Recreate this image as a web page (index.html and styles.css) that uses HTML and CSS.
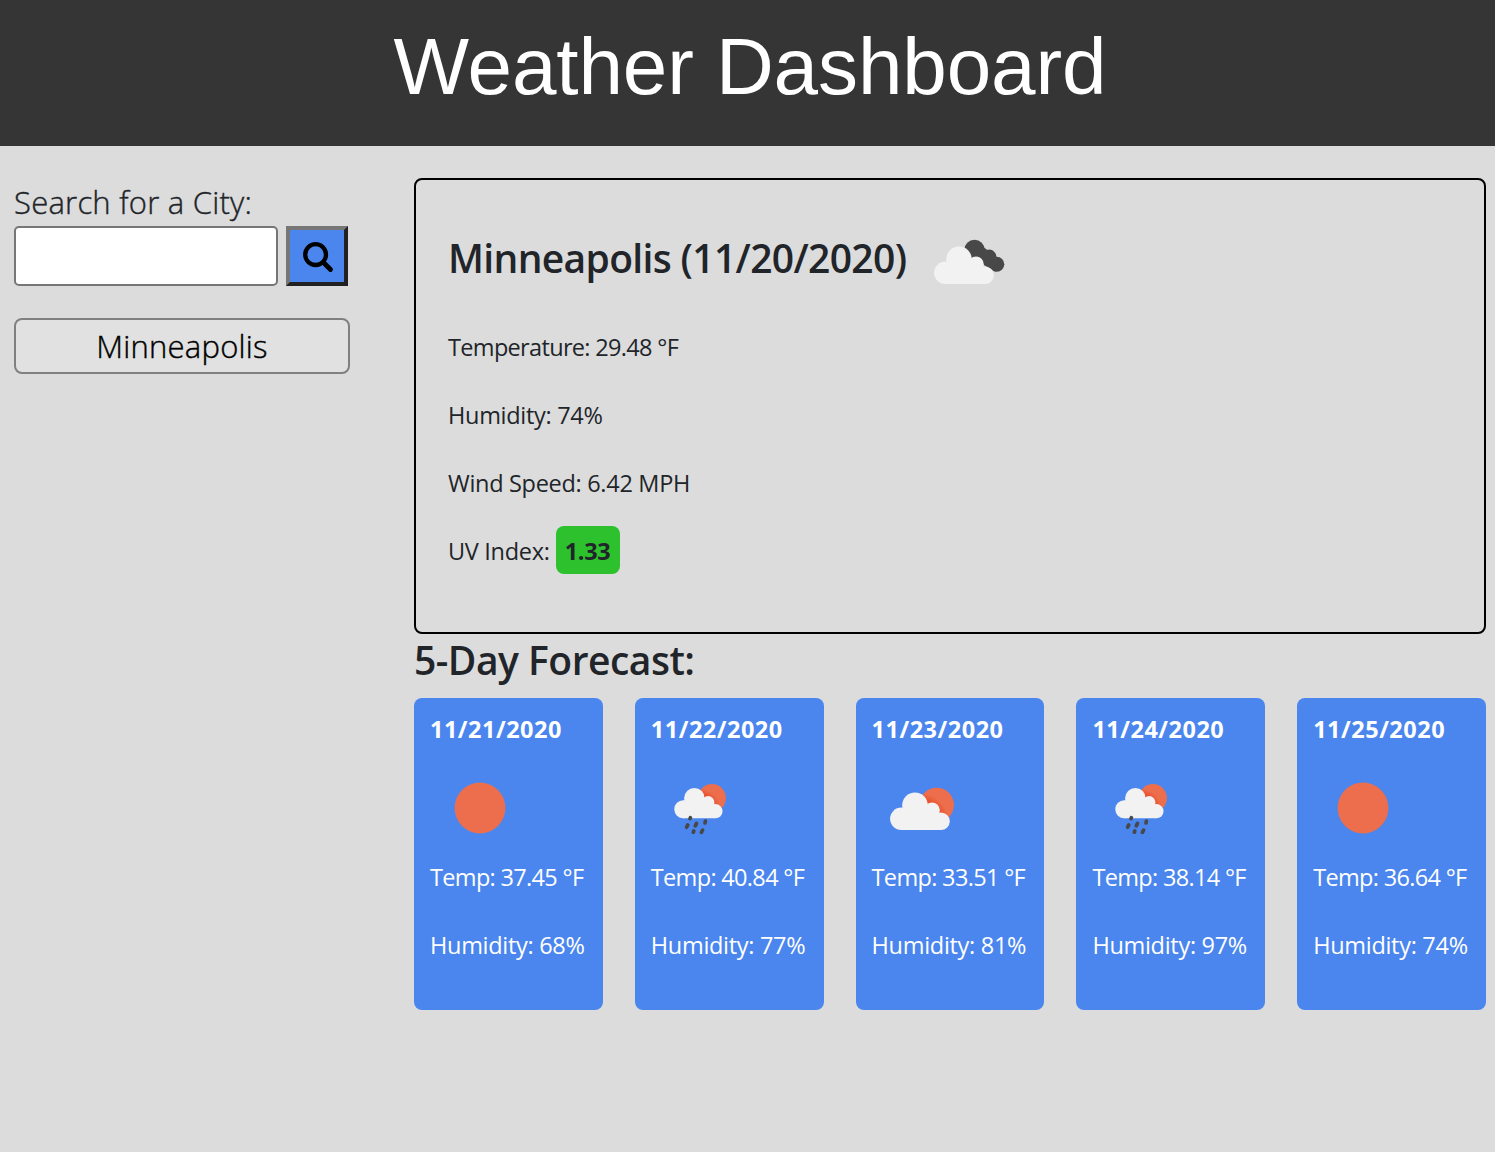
FILE: index.html
```html
<!DOCTYPE html>
<html lang="en">
<head>
<meta charset="utf-8">
<title>Weather Dashboard</title>
<link rel="stylesheet" href="styles.css">
</head>
<body>
<svg class="sprite" aria-hidden="true">
  <defs>
    <radialGradient id="shade" gradientUnits="userSpaceOnUse" cx="48" cy="64" r="32">
      <stop offset="0.6" stop-color="#e9431f"/><stop offset="0.9" stop-color="#ec6e4c"/>
    </radialGradient>
    <g id="cloud">
      <circle cx="29.3" cy="60.8" r="11.2"/><circle cx="43" cy="47.2" r="12.8"/>
      <circle cx="60" cy="52.3" r="7.8"/><circle cx="69" cy="63.2" r="8.8"/>
      <path d="M29 72V50H62L69 56V72Z"/>
    </g>
    <g id="cloud-sun">
      <circle cx="64.7" cy="47" r="17.3" fill="url(#shade)"/>
      <use href="#cloud" fill="#f2f2f2"/>
    </g>
    <symbol id="sun" viewBox="0 0 100 100"><circle cx="50" cy="50" r="25.4" fill="#ec6e4c"/></symbol>
    <symbol id="partly" viewBox="0 0 100 100"><use href="#cloud-sun"/></symbol>
    <symbol id="broken" viewBox="0 0 100 100">
      <g fill="#484848"><circle cx="58.5" cy="38" r="10.2"/><circle cx="73.3" cy="44.6" r="7"/><circle cx="80.8" cy="52.2" r="7.5"/><path d="M52 44L66 34L82 46L80 59.7L66 52Z"/></g>
      <use href="#cloud" fill="#f2f2f2"/>
    </symbol>
    <symbol id="rain" viewBox="0 0 100 100">
      <use href="#cloud-sun" transform="translate(8.66 2.12) scale(.808)"/>
      <g stroke="#484848" stroke-width="3.7" stroke-linecap="round"><path d="M39.4 59.6L39 60.6M36.8 67L35.6 69.2M45.5 65.4L44.3 67.8M54.4 63L54 65M42.8 73L42.3 74.2M51.6 72.2L50.4 74.4"/></g>
    </symbol>
  </defs>
</svg>
<header class="header"><h1 class="title">Weather Dashboard</h1></header>
<main class="layout">
  <aside class="sidebar">
    <label class="label" for="city">Search for a City:</label>
    <div class="search">
      <input class="field" id="city" type="text">
      <button class="go" aria-label="Search"><svg class="glass" viewBox="0 0 32 32"><circle cx="12.6" cy="12.6" r="10.4" fill="none" stroke="#000" stroke-width="4.3"/><path d="M20.5 20.5L27.5 27.5" stroke="#000" stroke-width="4.8" stroke-linecap="round"/></svg></button>
    </div>
    <button class="city">Minneapolis</button>
  </aside>
  <section class="content">
    <div class="current">
      <div class="heading"><h2 class="h2 place">Minneapolis (11/20/2020)</h2><svg class="icon"><use href="#broken"/></svg></div>
      <p class="line temp">Temperature: 29.48 °F</p>
      <p class="line">Humidity: 74%</p>
      <p class="line">Wind Speed: 6.42 MPH</p>
      <p class="line uv-line"><span>UV Index:</span><span class="uv">1.33</span></p>
    </div>
    <h2 class="h2 forecast-title">5-Day Forecast:</h2>
    <div class="forecast">
      <div class="card"><p class="date">11/21/2020</p><svg class="icon"><use href="#sun"/></svg><p class="line temp">Temp: 37.45 °F</p><p class="line">Humidity: 68%</p></div>
      <div class="card"><p class="date">11/22/2020</p><svg class="icon"><use href="#rain"/></svg><p class="line temp">Temp: 40.84 °F</p><p class="line">Humidity: 77%</p></div>
      <div class="card"><p class="date">11/23/2020</p><svg class="icon"><use href="#partly"/></svg><p class="line temp">Temp: 33.51 °F</p><p class="line">Humidity: 81%</p></div>
      <div class="card"><p class="date">11/24/2020</p><svg class="icon"><use href="#rain"/></svg><p class="line temp">Temp: 38.14 °F</p><p class="line">Humidity: 97%</p></div>
      <div class="card"><p class="date">11/25/2020</p><svg class="icon"><use href="#sun"/></svg><p class="line temp">Temp: 36.64 °F</p><p class="line">Humidity: 74%</p></div>
    </div>
  </section>
</main>
</body>
</html>
```
FILE: styles.css
```css
* { box-sizing: border-box; }
body { margin: 0; background: #dcdcdc; color: #212529; font-family: "Open Sans", "Noto Sans", sans-serif; font-size: 23.5px; line-height: 36px; }
h1, h2, p { margin: 0; }
.sprite { position: absolute; width: 0; height: 0; }
.header { height: 146px; background: #353535; color: #fff; text-align: center; padding: 19px 0 0 5px; }
.title { font: 400 80px/96px "Liberation Sans", Arial, sans-serif; letter-spacing: -0.1px; }
.layout { display: grid; grid-template-columns: 336px 1072px; column-gap: 64px; padding: 32px 9px 0 14px; }
.label { display: block; font-size: 31px; line-height: 48px; font-weight: 300; letter-spacing: 0.24px; -webkit-text-stroke: 0.4px; }
.search { display: flex; gap: 8px; }
.field { width: 264px; height: 60px; border: 2px solid #767676; border-radius: 5px; background: #fff; }
.go { width: 62px; height: 60px; padding: 3px 0 0 3px; border: 4px solid; border-color: #767676 #212121 #212121 #767676; background: #4a86ee; display: grid; place-items: center; }
.glass { width: 32px; height: 32px; }
.city { display: block; width: 336px; height: 56px; margin-top: 32px; padding: 0; border: 2px solid #808080; border-radius: 8px; background: #e1e1e1; color: #000; font: 300 31px/48px "Open Sans", sans-serif; letter-spacing: 0.24px; -webkit-text-stroke: 0.4px; }
.current { height: 456px; border: 2px solid #000; border-radius: 8px; padding: 32px; }
.heading { display: grid; grid-template-columns: 468px 100px; align-items: center; height: 100px; }
.icon { display: block; width: 100px; height: 100px; }
.h2 { font-size: 39px; line-height: 48px; font-weight: 600; letter-spacing: -0.5px; white-space: nowrap; }
.place { padding-bottom: 8px; letter-spacing: -0.65px; }
.line { margin-bottom: 32px; white-space: nowrap; letter-spacing: -0.3px; }
.temp { letter-spacing: -0.67px; }
.current .heading { margin-bottom: 17px; }
.uv-line { display: flex; align-items: center; height: 36px; }
.uv { width: 64px; height: 48px; margin: -2px 0 0 6px; line-height: 51px; background: #2dc22d; border-radius: 8px; text-align: center; font-weight: 700; }
.forecast-title { margin: 2px 0 14px; }
.forecast { display: grid; grid-template-columns: repeat(5, 1fr); gap: 32px; }
.card { height: 312px; background: #4a86ee; border-radius: 8px; padding: 13px 0 0 16px; color: #fff; }
.card .icon { margin: 11px 0 1px; }
.date { font-weight: 700; letter-spacing: 0.5px; }
```
